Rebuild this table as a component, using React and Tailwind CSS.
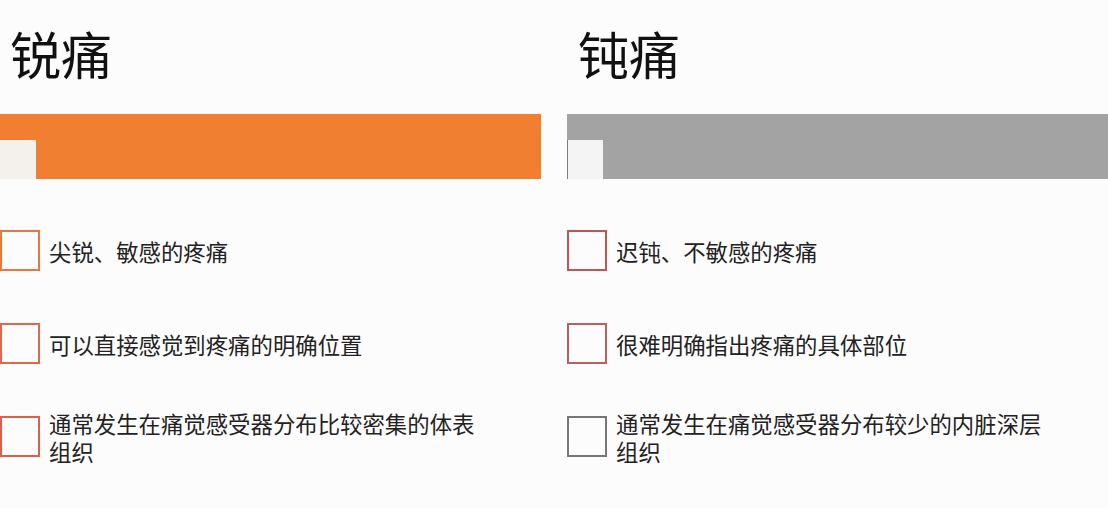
const columns = [
  {
    title: "锐痛",
    bar: "bg-[#f07f31]",
    square: "bg-[#f4f0ec]",
    items: [
      { text: "尖锐、敏感的疼痛", box: "border-[#e8793a]" },
      { text: "可以直接感觉到疼痛的明确位置", box: "border-[#e0684a]" },
      { text: "通常发生在痛觉感受器分布比较密集的体表组织", box: "border-[#da604c]" },
    ],
  },
  {
    title: "钝痛",
    bar: "bg-[#a4a3a4]",
    square: "bg-[#f4f4f4] border-l border-[#7d7d7d]",
    items: [
      { text: "迟钝、不敏感的疼痛", box: "border-[#c05555]" },
      { text: "很难明确指出疼痛的具体部位", box: "border-[#b86062]" },
      { text: "通常发生在痛觉感受器分布较少的内脏深层组织", box: "border-[#777]" },
    ],
  },
];

function Column({ title, bar, square, items, indent }) {
  return (
    <section className="flex flex-col">
      <h2 className={`h-[114px] pt-[28px] text-[51px] leading-[51px] font-normal text-[#111] ${indent}`}>
        {title}
      </h2>
      <div className={`flex h-[65px] items-end ${bar}`}>
        <div className={`h-[39px] w-[36px] ${square}`} />
      </div>
      <ul className="flex flex-col pt-[25px]">
        {items.map((item) => (
          <li key={item.text} className="flex h-[93px] items-center gap-[9px]">
            <span className={`h-[41px] w-[40px] shrink-0 border-2 bg-[#fdfcfd] ${item.box}`} />
            <span className="w-[440px] text-[22.4px] leading-[28px] text-[#222]">
              {item.text}
            </span>
          </li>
        ))}
      </ul>
    </section>
  );
}

export default function App() {
  return (
    <main
      className="grid h-[508px] w-[1108px] grid-cols-2 gap-[26px] overflow-hidden bg-[#fdfcfd]"
      style={{ fontFamily: '"Noto Sans CJK SC", "Noto Sans", sans-serif' }}
    >
      <Column {...columns[0]} indent="pl-[10px]" />
      <Column {...columns[1]} indent="pl-[11px]" />
    </main>
  );
}
